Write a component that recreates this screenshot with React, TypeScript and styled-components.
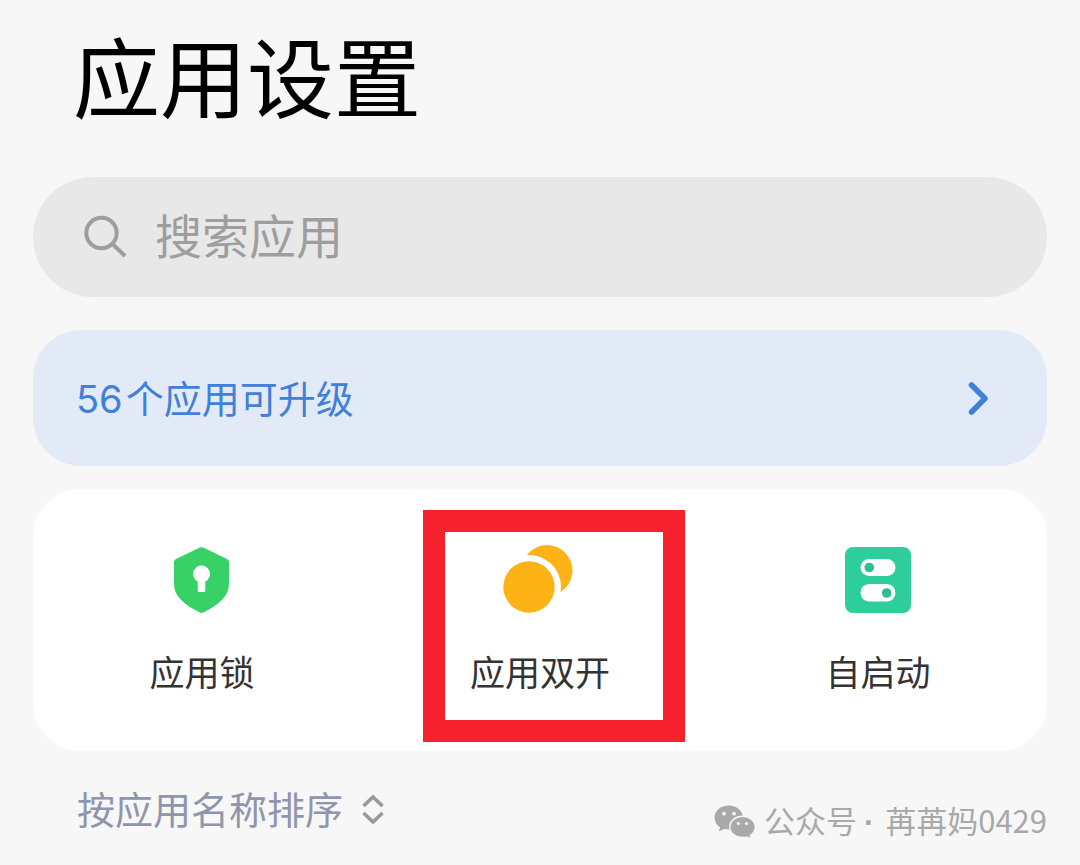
import React from "react";
import styled, { createGlobalStyle } from "styled-components";

const GlobalStyle = createGlobalStyle`
  *, *::before, *::after { box-sizing: border-box; }
  body {
    margin: 0;
    background: #f7f7f7;
    color: #333;
    font-family: "Noto Sans CJK SC", sans-serif;
  }
  button, input { font: inherit; color: inherit; }
  button { border: 0; padding: 0; background: none; cursor: pointer; }
  svg { display: block; flex: none; }
`;

const Page = styled.main`
  display: flex;
  flex-direction: column;
  padding: 24px 33px;
`;

const Title = styled.h1`
  margin: 0 0 53px;
  padding: 0 40px;
  color: #000;
  font-size: 87px;
  font-weight: 400;
  line-height: 100px;
`;

const SearchBar = styled.label`
  display: flex;
  align-items: center;
  gap: 26px;
  height: 120px;
  margin-bottom: 33px;
  padding: 0 50px;
  border-radius: 60px;
  background: #e8e8e8;
  color: #9e9e9e;
`;

const SearchInput = styled.input`
  flex: 1;
  min-width: 0;
  padding: 0 0 6px;
  border: 0;
  outline: 0;
  background: transparent;
  font-size: 47px;
  line-height: 68px;

  &::placeholder { color: #9e9e9e; opacity: 1; }
`;

const UpdateBanner = styled.button`
  display: flex;
  align-items: center;
  justify-content: space-between;
  height: 136px;
  margin-bottom: 23px;
  padding: 0 57px 0 43px;
  border-radius: 48px;
  background: #e3eaf7;
  color: #3f80d8;
  font-size: 38px;
  line-height: 48px;
`;

const UpdateText = styled.span`
  display: flex;
  align-items: baseline;
  gap: 3px;
`;

const Count = styled.span`
  font-family: "Inter", sans-serif;
`;

const ToolCard = styled.section`
  display: grid;
  grid-template-columns: repeat(3, 1fr);
  margin-bottom: 32px;
  border-radius: 48px;
  background: #fff;
`;

const ToolCell = styled.div`
  position: relative;
  display: flex;
`;

const ToolButton = styled.button`
  display: flex;
  flex: 1;
  flex-direction: column;
  align-items: center;
  gap: 32px;
  padding: 56px 0;
  font-size: 35px;
  line-height: 48px;
`;

const Highlight = styled.div`
  position: absolute;
  top: 21px;
  left: calc(50% - 117px);
  width: 262px;
  height: 232px;
  border: 22px solid #f7212d;
  pointer-events: none;
`;

const Footer = styled.footer`
  display: flex;
  align-items: flex-start;
  justify-content: space-between;
`;

const SortButton = styled.button`
  display: flex;
  align-items: center;
  gap: 18px;
  padding-left: 44px;
  color: #8f95ab;
  font-size: 38px;
  line-height: 50px;
`;

const Account = styled.p`
  display: flex;
  align-items: center;
  gap: 8px;
  margin: 0;
  padding-top: 15px;
  color: #a9a9a9;
  font-size: 31px;
  line-height: 44px;
`;

const Dot = styled.span`
  margin-right: 4px;
  font-family: "Liberation Sans", sans-serif;
  font-weight: 700;
`;

const SearchIcon = () => (
  <svg width="46" height="46" viewBox="0 0 46 46" fill="none" stroke="currentColor" strokeWidth="4" aria-hidden="true">
    <circle cx="18.5" cy="19" r="15.2" />
    <path d="M29.5 30 42 42" />
  </svg>
);

const ChevronIcon = () => (
  <svg width="24" height="36" viewBox="0 0 24 36" fill="none" stroke="currentColor" strokeWidth="5.5" strokeLinecap="round" strokeLinejoin="round" aria-hidden="true">
    <path d="M5.500 5 19 18.500 5.500 32" />
  </svg>
);

const LockIcon = () => (
  <svg width="70" height="70" viewBox="0 0 70 70" aria-hidden="true">
    <path
      fill="#38d166"
      d="M32.800 2.600Q34.500 1.800 36.200 2.600L60 14Q62 15 62 17V39C62 51 52 59.500 36.200 67.600Q34.500 68.400 32.800 67.600C17 59.500 7 51 7 39V17Q7 15 9 14Z"
    />
    <circle cx="34.500" cy="29" r="8.500" fill="#fff" />
    <path fill="#fff" d="M30.700 32h7.600v13.500q0 1.500-1.500 1.500h-4.600q-1.500 0-1.500-1.500z" />
  </svg>
);

const CloneIcon = () => (
  <svg width="74" height="70" viewBox="0 0 74 70" aria-hidden="true">
    <circle cx="44" cy="25.500" r="25.500" fill="#fdb316" />
    <circle cx="26" cy="42" r="32" fill="#fff" />
    <circle cx="26" cy="42" r="25.700" fill="#fdb316" />
  </svg>
);

const TogglesIcon = () => (
  <svg width="70" height="70" viewBox="0 0 70 70" aria-hidden="true">
    <rect x="2" y="2" width="66" height="66" rx="8" fill="#2ece9c" />
    <rect x="17.500" y="14" width="35" height="17" rx="8.500" fill="#fff" />
    <rect x="17.500" y="39" width="35" height="17.500" rx="8.700" fill="#fff" />
    <circle cx="26.300" cy="22.500" r="4.800" fill="#2fbd92" />
    <circle cx="43.700" cy="48" r="4.800" fill="#2fbd92" />
  </svg>
);

const SortIcon = () => (
  <svg width="24" height="32" viewBox="0 0 24 32" fill="none" stroke="#999" strokeWidth="3.6" aria-hidden="true">
    <path d="M2.500 14 12 5l9.500 9M2.500 21 12 30l9.500-9" />
  </svg>
);

const WeChatIcon = () => (
  <svg width="42" height="34" viewBox="0 0 42 34" aria-hidden="true">
    <path fill="#a9a9a9" d="M15 0.500C6.700.500.500 6 .500 12.700c0 4 2.200 7.300 5.500 9.600L5 26.500l5.500-2.700c1.500.400 3 .600 4.500.600 8 0 14-5.200 14-11.700S23 .500 15 .500Z" />
    <circle cx="10" cy="8.700" r="1.900" fill="#f7f7f7" />
    <circle cx="20" cy="8.700" r="1.900" fill="#f7f7f7" />
    <path
      fill="#a9a9a9"
      stroke="#f7f7f7"
      strokeWidth="1.400"
      d="M28.500 11.300c-7 0-12.700 4.600-12.700 10.600s5.700 10.600 12.700 10.600c1.600 0 3-.200 4.300-.600l4.600 2.400-1.100-4c3.100-2 5-5 5-8.400 0-6-5.800-10.600-12.800-10.600Z"
    />
    <circle cx="24.300" cy="18.500" r="1.600" fill="#f7f7f7" />
    <circle cx="32.500" cy="18.500" r="1.600" fill="#f7f7f7" />
  </svg>
);

const tools = [
  { label: "应用锁", Icon: LockIcon, highlighted: false },
  { label: "应用双开", Icon: CloneIcon, highlighted: true },
  { label: "自启动", Icon: TogglesIcon, highlighted: false },
];

export default function App() {
  return (
    <>
      <GlobalStyle />
      <Page>
        <Title>应用设置</Title>
        <SearchBar>
          <SearchIcon />
          <SearchInput type="text" placeholder="搜索应用" aria-label="搜索应用" />
        </SearchBar>
        <UpdateBanner type="button">
          <UpdateText>
            <Count>56</Count>
            <span>个应用可升级</span>
          </UpdateText>
          <ChevronIcon />
        </UpdateBanner>
        <ToolCard>
          {tools.map(({ label, Icon, highlighted }) => (
            <ToolCell key={label}>
              <ToolButton type="button">
                <Icon />
                <span>{label}</span>
              </ToolButton>
              {highlighted && <Highlight />}
            </ToolCell>
          ))}
        </ToolCard>
        <Footer>
          <SortButton type="button">
            <span>按应用名称排序</span>
            <SortIcon />
          </SortButton>
          <Account>
            <WeChatIcon />
            <span>
              公众号 <Dot>·</Dot> 苒苒妈0429
            </span>
          </Account>
        </Footer>
      </Page>
    </>
  );
}
